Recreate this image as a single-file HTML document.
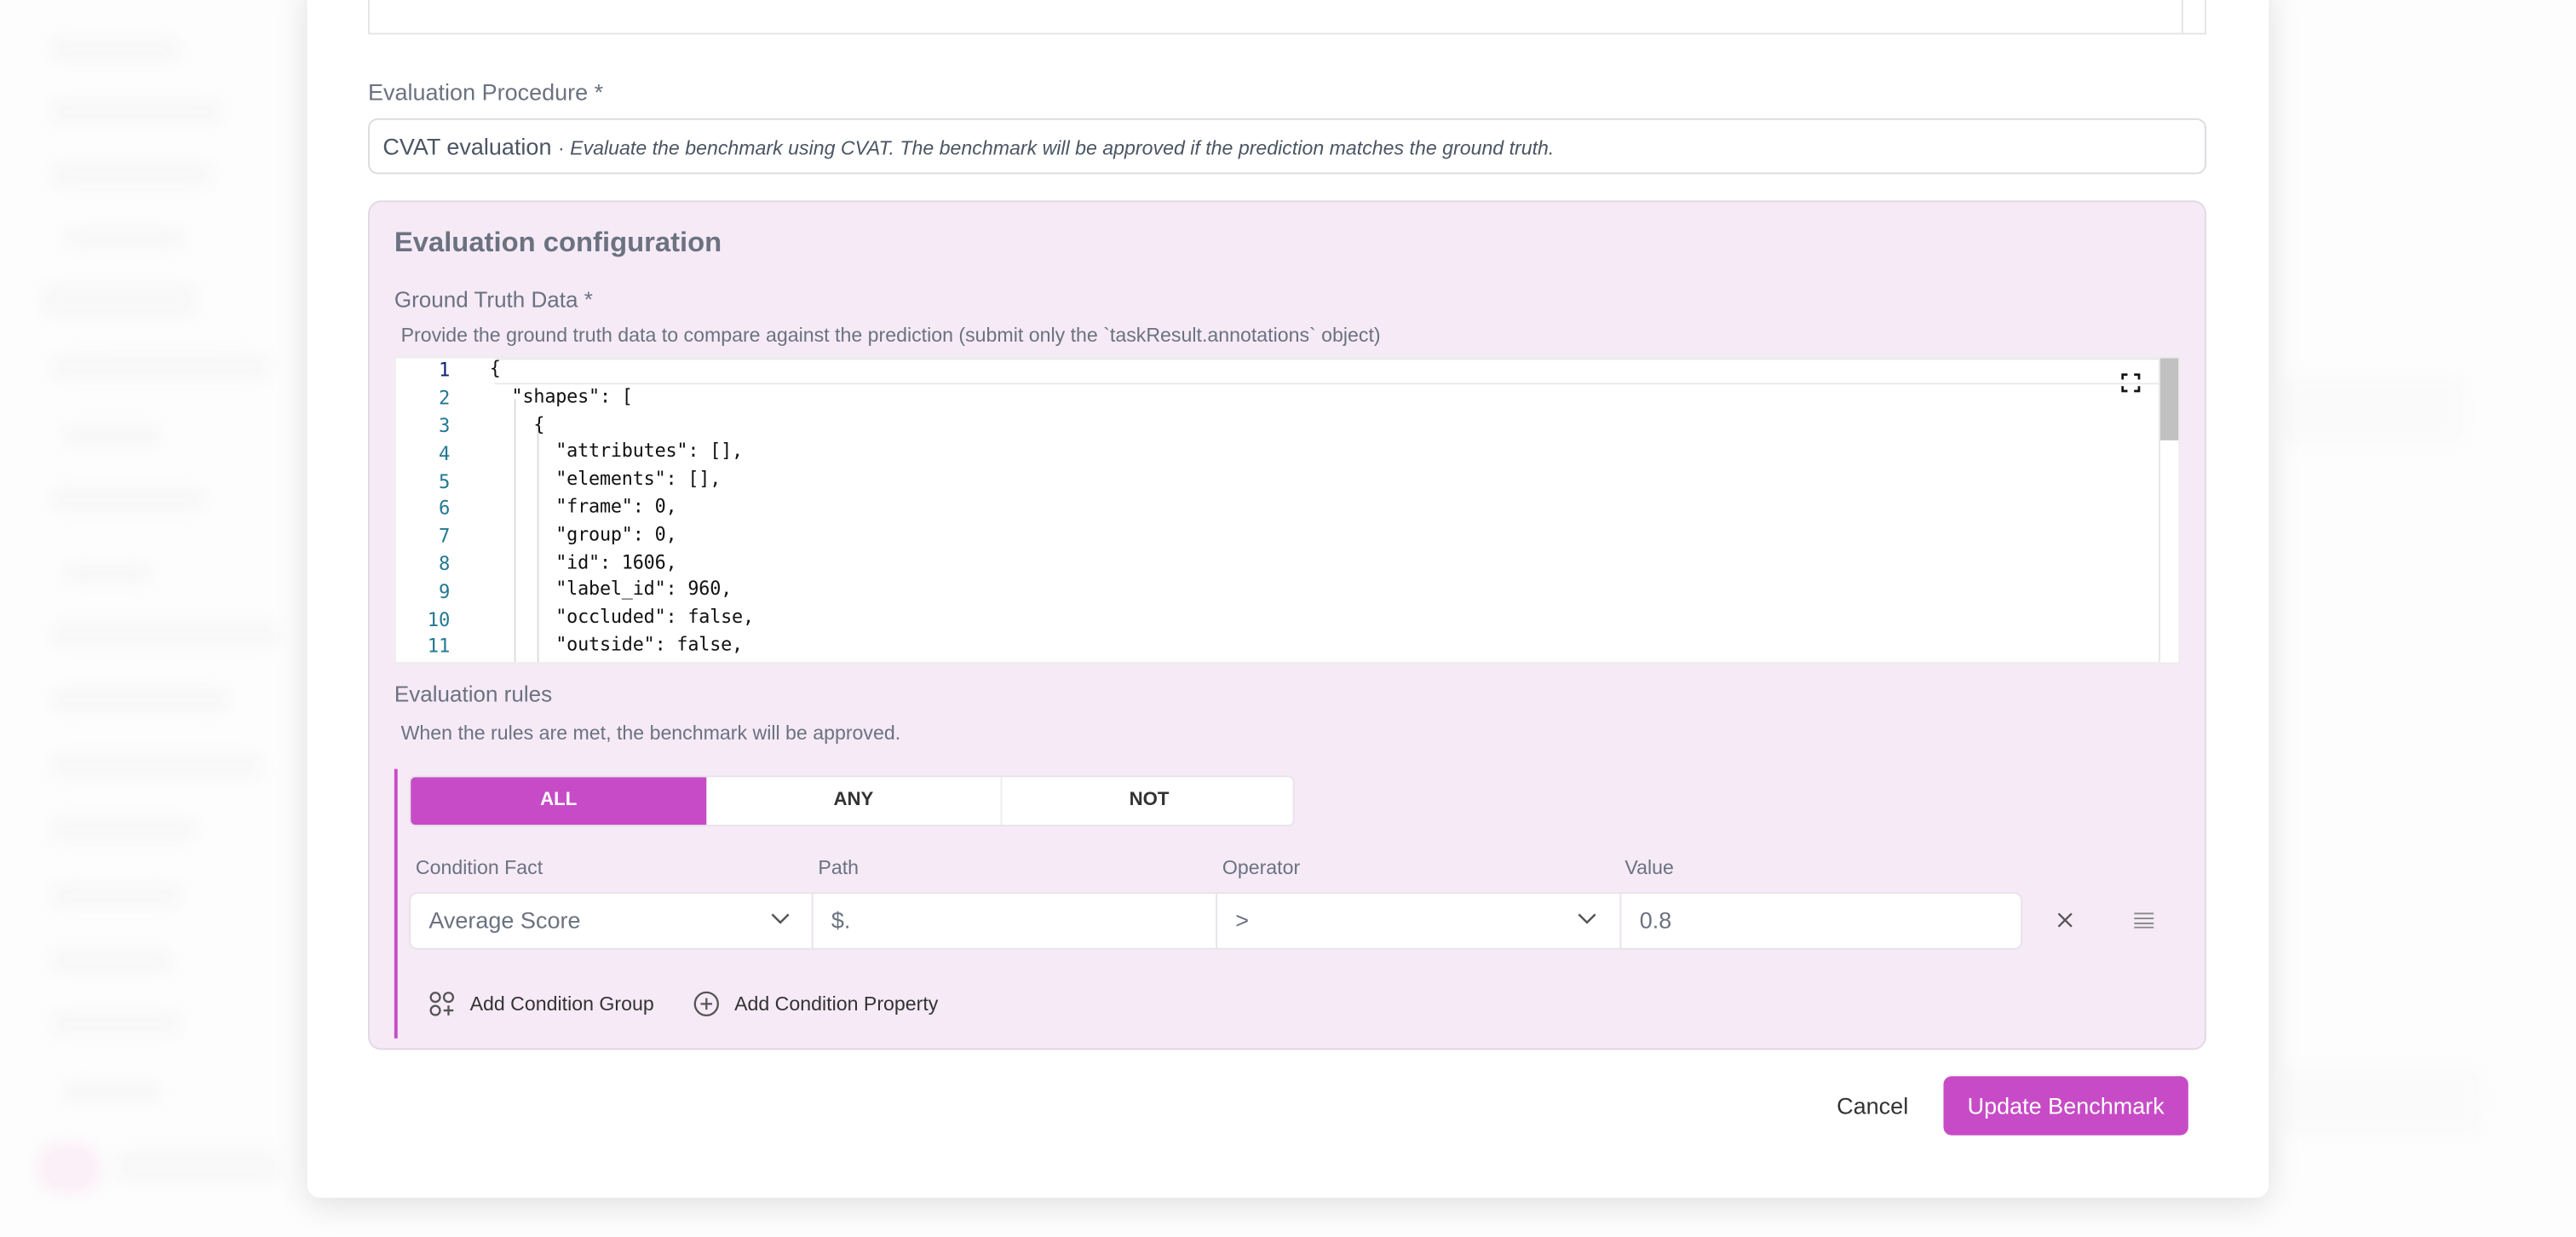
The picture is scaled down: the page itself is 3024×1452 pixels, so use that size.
<!DOCTYPE html>
<html><head><style>
html,body{margin:0;padding:0;width:3024px;height:1452px;overflow:hidden;background:#fdfdfd;font-family:"Liberation Sans",sans-serif}
#w{position:absolute;left:0;top:0;width:1568px;height:753px;transform:scale(1.92857);transform-origin:0 0}
.a{position:absolute}
.blur{position:absolute;background:#f6f6f7;border-radius:8px;filter:blur(4px);opacity:.7}
.lab{color:#6b7280;font-size:13.5px}
.mono{font-family:"DejaVu Sans Mono","Liberation Mono",monospace;font-size:11.3px;color:#111;letter-spacing:-0.1px}
.ln{position:absolute;width:38px;text-align:right;color:#237893;font-family:"DejaVu Sans Mono",monospace;font-size:11.5px}
.inp{position:absolute;top:543px;height:35px;background:#fff;border:1px solid #e8e2ea;box-sizing:border-box;color:#6b7280;font-size:14px;line-height:33px;padding-left:11px}
</style></head><body><div id="w">
<div class="blur" style="left:30px;top:22px;width:80px;height:16px"></div>
<div class="blur" style="left:30px;top:60px;width:105px;height:16px"></div>
<div class="blur" style="left:30px;top:98px;width:100px;height:16px"></div>
<div class="blur" style="left:38px;top:138px;width:75px;height:14px"></div>
<div class="blur" style="left:25px;top:172px;width:95px;height:22px"></div>
<div class="blur" style="left:30px;top:215px;width:135px;height:16px"></div>
<div class="blur" style="left:38px;top:258px;width:60px;height:14px"></div>
<div class="blur" style="left:30px;top:296px;width:95px;height:16px"></div>
<div class="blur" style="left:38px;top:342px;width:55px;height:14px"></div>
<div class="blur" style="left:30px;top:378px;width:140px;height:16px"></div>
<div class="blur" style="left:30px;top:418px;width:110px;height:16px"></div>
<div class="blur" style="left:30px;top:458px;width:130px;height:16px"></div>
<div class="blur" style="left:30px;top:497px;width:90px;height:16px"></div>
<div class="blur" style="left:30px;top:537px;width:80px;height:16px"></div>
<div class="blur" style="left:30px;top:577px;width:75px;height:16px"></div>
<div class="blur" style="left:30px;top:615px;width:80px;height:16px"></div>
<div class="blur" style="left:38px;top:658px;width:60px;height:14px"></div>
<div class="blur" style="left:22px;top:695px;width:40px;height:32px;border-radius:20px;background:#fbeaf5"></div>
<div class="blur" style="left:70px;top:700px;width:100px;height:20px"></div>
<div class="blur" style="left:1390px;top:230px;width:110px;height:40px;opacity:.4"></div>
<div class="blur" style="left:1390px;top:650px;width:120px;height:40px;opacity:.4"></div>
<div class="a" style="left:187px;top:-10px;width:1194px;height:739px;background:#fff;border-radius:0 0 8px 8px;box-shadow:0 4px 20px rgba(0,0,0,.12)"></div>
<div class="a" style="left:224px;top:-5px;width:1119px;height:26px;border:1px solid #e5e5e5;border-top:none;box-sizing:border-box"></div>
<div class="a" style="left:1328px;top:0;width:1px;height:21px;background:#e5e5e5"></div>
<div class="a lab" style="left:224px;top:48px;font-size:14px">Evaluation Procedure *</div>
<div class="a" style="left:224px;top:72px;width:1119px;height:34px;border:1px solid #dcdcdf;border-radius:6px;box-sizing:border-box;padding-left:8px;line-height:32px;color:#4b5563;font-size:14px">CVAT evaluation <span style="font-size:12px;font-style:italic">· Evaluate the benchmark using CVAT. The benchmark will be approved if the prediction matches the ground truth.</span></div>
<div class="a" style="left:224px;top:122px;width:1119px;height:517px;background:#f6eaf7;border:1px solid #e2d8e6;border-radius:8px;box-sizing:border-box"></div>
<div class="a" style="left:240px;top:138px;font-size:17px;font-weight:bold;color:#6b7280">Evaluation configuration</div>
<div class="a lab" style="left:240px;top:175px">Ground Truth Data *</div>
<div class="a" style="left:244px;top:197px;font-size:12px;color:#6b7280">Provide the ground truth data to compare against the prediction (submit only the `taskResult.annotations` object)</div>
<div class="a" style="left:240px;top:217px;width:1087px;height:187px;background:#fff;border:1px solid #ececec;box-sizing:border-box;overflow:hidden">
 <div class="a" style="left:60px;top:0;width:1014px;height:16px;border:1px solid #eaeaea;border-left:none;box-sizing:border-box"></div>
 <div class="a" style="left:1073px;top:0;width:13px;height:187px;border-left:1px solid #e6e6e6;background:#fff"></div>
 <div class="a" style="left:1074px;top:0;width:13px;height:50px;background:#c1c1c1"></div>
 <div class="a" style="left:1050px;top:8px;width:12px;height:12px">
  <svg width="12" height="12" viewBox="0 0 12 12" fill="none" stroke="#111" stroke-width="1.4"><path d="M1 4V1h3M8 1h3v3M11 8v3H8M4 11H1V8"/></svg></div>
 <div class="a" style="left:72px;top:25px;width:1px;height:162px;background:#ddd"></div>
 <div class="a" style="left:86px;top:42px;width:1px;height:145px;background:#ddd"></div>
</div>
<div class="a" style="left:240px;top:217px">
<div class="ln" style="left:-4px;top:1px;color:#0b216f">1</div><div class="ln" style="left:-4px;top:18px">2</div><div class="ln" style="left:-4px;top:35px">3</div><div class="ln" style="left:-4px;top:52px">4</div><div class="ln" style="left:-4px;top:69px">5</div><div class="ln" style="left:-4px;top:85px">6</div><div class="ln" style="left:-4px;top:102px">7</div><div class="ln" style="left:-4px;top:119px">8</div><div class="ln" style="left:-4px;top:136px">9</div><div class="ln" style="left:-4px;top:153px">10</div><div class="ln" style="left:-4px;top:169px">11</div>
<div class="a mono" style="left:58px;top:0px;white-space:pre;line-height:16.8px">{
  "shapes": [
    {
      "attributes": [],
      "elements": [],
      "frame": 0,
      "group": 0,
      "id": 1606,
      "label_id": 960,
      "occluded": false,
      "outside": false,</div>
</div>
<div class="a lab" style="left:240px;top:415px">Evaluation rules</div>
<div class="a" style="left:244px;top:439px;font-size:12px;color:#6b7280">When the rules are met, the benchmark will be approved.</div>
<div class="a" style="left:240px;top:468px;width:2px;height:164px;background:#c74bc6"></div>
<div class="a" style="left:249px;top:472px;width:539px;height:31px;background:#fff;border:1px solid #e8e2ea;border-radius:4px;box-sizing:border-box;overflow:hidden;font-size:11.5px;font-weight:bold;color:#333;line-height:29px;text-align:center">
 <div class="a" style="left:0;top:0;width:180px;height:31px;background:#c74bc6;color:#fff">ALL</div>
 <div class="a" style="left:180px;top:0;width:179px;height:31px">ANY</div>
 <div class="a" style="left:359px;top:0;width:179px;height:31px;border-left:1px solid #eee">NOT</div>
</div>
<div class="a" style="left:253px;top:521px;font-size:12px;color:#6b7280">Condition Fact</div>
<div class="a" style="left:498px;top:521px;font-size:12px;color:#6b7280">Path</div>
<div class="a" style="left:744px;top:521px;font-size:12px;color:#6b7280">Operator</div>
<div class="a" style="left:989px;top:521px;font-size:12px;color:#6b7280">Value</div>
<div class="inp" style="left:249px;width:246px;border-radius:5px 0 0 5px">Average Score</div>
<div class="inp" style="left:494px;width:247px">$.</div>
<div class="inp" style="left:740px;width:247px">&gt;</div>
<div class="inp" style="left:986px;width:245px;border-radius:0 5px 5px 0">0.8</div>
<svg class="a" style="left:469px;top:555px" width="12" height="8" viewBox="0 0 12 8" fill="none" stroke="#555" stroke-width="1.3"><path d="M1 1.5l5 5 5-5"/></svg>
<svg class="a" style="left:960px;top:555px" width="12" height="8" viewBox="0 0 12 8" fill="none" stroke="#555" stroke-width="1.3"><path d="M1 1.5l5 5 5-5"/></svg>
<svg class="a" style="left:1252px;top:555px" width="10" height="10" viewBox="0 0 10 10" stroke="#555" stroke-width="1.2"><path d="M1 1l8 8M9 1l-8 8"/></svg>
<svg class="a" style="left:1299px;top:555px" width="12" height="10" viewBox="0 0 12 10" stroke="#888" stroke-width="1"><path d="M0 1h12M0 4h12M0 7h12M0 9.5h12"/></svg>
<svg class="a" style="left:261px;top:603px" width="16" height="16" viewBox="0 0 16 16" fill="none" stroke="#555" stroke-width="1.2"><circle cx="4" cy="4" r="2.8"/><circle cx="12" cy="4" r="2.8"/><circle cx="4" cy="12" r="2.8"/><path d="M12 9v6M9 12h6"/></svg>
<div class="a" style="left:286px;top:604px;font-size:12px;color:#333">Add Condition Group</div>
<svg class="a" style="left:422px;top:603px" width="16" height="16" viewBox="0 0 16 16" fill="none" stroke="#555" stroke-width="1.2"><circle cx="8" cy="8" r="7"/><path d="M8 4.5v7M4.5 8h7"/></svg>
<div class="a" style="left:447px;top:604px;font-size:12px;color:#333">Add Condition Property</div>
<div class="a" style="left:1118px;top:665px;font-size:14px;color:#333">Cancel</div>
<div class="a" style="left:1183px;top:655px;width:149px;height:36px;background:#c74bc6;border-radius:5px;color:#fff;font-size:14px;line-height:36px;text-align:center">Update Benchmark</div>
</div></body></html>
